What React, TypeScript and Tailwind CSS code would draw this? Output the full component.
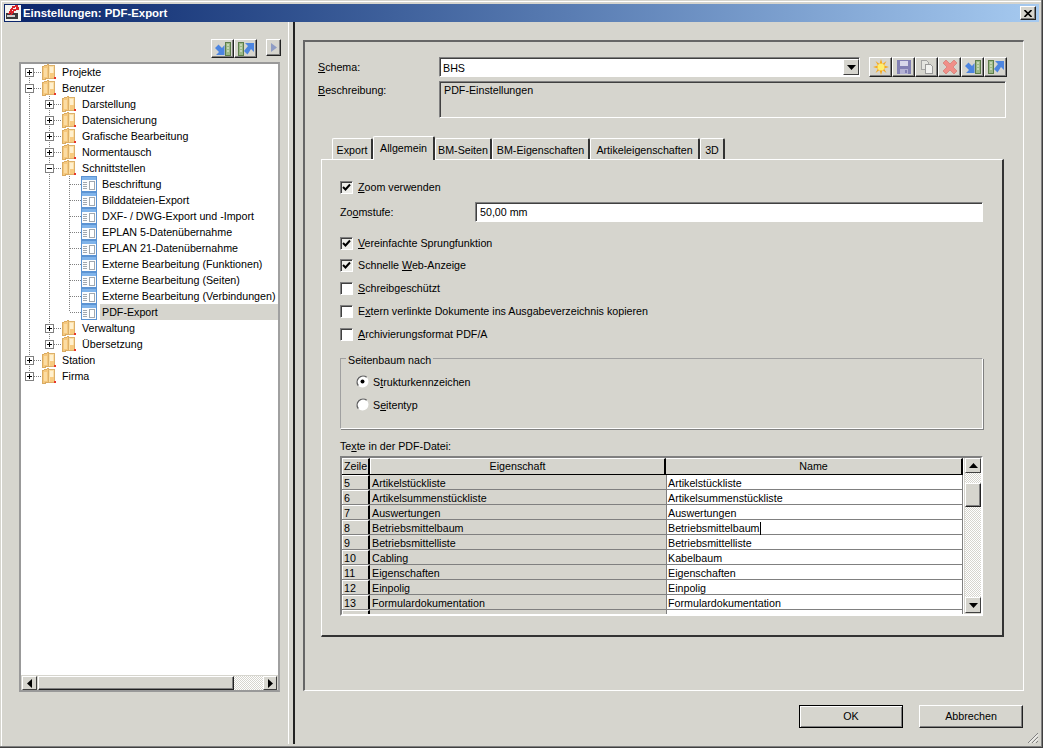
import type { ReactNode } from 'react'

const raised = 'border border-t-white border-l-white border-r-[#222] border-b-[#222] shadow-[inset_-1px_-1px_0_#808080]'
const sunken = 'border border-t-[#808080] border-l-[#808080] border-r-white border-b-white shadow-[inset_1px_1px_0_#404040]'
const dither = 'bg-[repeating-conic-gradient(#fff_0_25%,#d6d5ce_0_50%)] bg-[length:2px_2px]'

type TreeNode = { label: string; open?: boolean; doc?: boolean; selected?: boolean; children?: TreeNode[] }

const tree: TreeNode[] = [
  { label: 'Projekte' },
  {
    label: 'Benutzer',
    open: true,
    children: [
      { label: 'Darstellung' },
      { label: 'Datensicherung' },
      { label: 'Grafische Bearbeitung' },
      { label: 'Normentausch' },
      {
        label: 'Schnittstellen',
        open: true,
        children: [
          { label: 'Beschriftung', doc: true },
          { label: 'Bilddateien-Export', doc: true },
          { label: 'DXF- / DWG-Export und -Import', doc: true },
          { label: 'EPLAN 5-Datenübernahme', doc: true },
          { label: 'EPLAN 21-Datenübernahme', doc: true },
          { label: 'Externe Bearbeitung (Funktionen)', doc: true },
          { label: 'Externe Bearbeitung (Seiten)', doc: true },
          { label: 'Externe Bearbeitung (Verbindungen)', doc: true },
          { label: 'PDF-Export', doc: true, selected: true },
        ],
      },
      { label: 'Verwaltung' },
      { label: 'Übersetzung' },
    ],
  },
  { label: 'Station' },
  { label: 'Firma' },
]

const tableRows = [
  ['5', 'Artikelstückliste', 'Artikelstückliste'],
  ['6', 'Artikelsummenstückliste', 'Artikelsummenstückliste'],
  ['7', 'Auswertungen', 'Auswertungen'],
  ['8', 'Betriebsmittelbaum', 'Betriebsmittelbaum'],
  ['9', 'Betriebsmittelliste', 'Betriebsmittelliste'],
  ['10', 'Cabling', 'Kabelbaum'],
  ['11', 'Eigenschaften', 'Eigenschaften'],
  ['12', 'Einpolig', 'Einpolig'],
  ['13', 'Formulardokumentation', 'Formulardokumentation'],
  ['14', 'Fremddokument', 'Fremddokument'],
]

function FolderIcon() {
  return (
    <svg width="16" height="16" viewBox="0 0 16 16" className="shrink-0" shapeRendering="crispEdges">
      <path d="M1.5 2.5 L7.5 0.5 L7.5 14.5 L1.5 15.5 Z" fill="#f6c87c" stroke="#d9ab62" />
      <path d="M7.5 1.5 L13.5 1.5 L13.5 14.5 L7.5 14.5 Z" fill="#fcdfa4" stroke="#dcb06a" />
      <rect x="3" y="4" width="3" height="9" fill="#fbdca2" />
      <rect x="9" y="3" width="3" height="6" fill="#fff0cf" />
      <rect x="9" y="9" width="4" height="5" fill="#f8cb80" />
      <rect x="13" y="13" width="2" height="2" fill="#e8352a" />
    </svg>
  )
}

function DocIcon() {
  return (
    <svg width="16" height="16" viewBox="0 0 16 16" className="shrink-0" shapeRendering="crispEdges">
      <rect x="0.5" y="0.5" width="15" height="15" fill="#fbfcfe" stroke="#5b93d3" />
      <rect x="1" y="1" width="14" height="3" fill="#7fb3ea" />
      <path d="M2 6h4M2 8h4M2 10h4M2 12h4" stroke="#a0a8b0" />
      <rect x="8.5" y="5.5" width="5" height="8" fill="#fff" stroke="#a0a8b0" />
    </svg>
  )
}

function ArrowIn() {
  return (
    <svg width="16" height="14" viewBox="0 0 16 14">
      <rect x="10.5" y="0.5" width="5" height="13" fill="#9cb886" stroke="#5d7d4a" />
      <path d="M12 3h2M12 6h2M12 9h2" stroke="#eef4e0" />
      <path d="M9.5 3 L9.5 13 L1 13 L4 10 L0 6 L3.5 2.5 L7 6 Z" fill="#4c85e0" />
    </svg>
  )
}

function ArrowOut() {
  return (
    <svg width="16" height="14" viewBox="0 0 16 14">
      <rect x="0.5" y="0.5" width="5" height="13" fill="#9cb886" stroke="#5d7d4a" />
      <path d="M2 3h2M2 6h2M2 9h2" stroke="#eef4e0" />
      <path d="M7 1 L16 1 L16 10 L13 7 L9.5 12.5 L6 9 L10 4 Z" fill="#4c85e0" />
    </svg>
  )
}

function Burst() {
  return (
    <svg width="16" height="16" viewBox="0 0 16 16">
      <path d="M8 0 L9.5 5 L13.5 2 L11 6.5 L16 8 L11 9.5 L13.5 14 L9.5 11 L8 16 L6.5 11 L2.5 14 L5 9.5 L0 8 L5 6.5 L2.5 2 L6.5 5 Z" fill="#f6a81c" />
      <circle cx="8" cy="8" r="3.5" fill="#ffee70" />
    </svg>
  )
}

function Disk() {
  return (
    <svg width="14" height="14" viewBox="0 0 14 14" shapeRendering="crispEdges">
      <rect x="0" y="0" width="14" height="14" fill="#8280b4" />
      <rect x="3" y="1" width="8" height="5" fill="#d8d8ea" />
      <rect x="3" y="9" width="8" height="5" fill="#b4b2d4" />
      <rect x="8" y="10" width="2" height="3" fill="#8280b4" />
    </svg>
  )
}

function Copy() {
  return (
    <svg width="14" height="14" viewBox="0 0 14 14" shapeRendering="crispEdges">
      <path d="M1.5 0.5h5l2 2v7h-7z" fill="#e4e4e0" stroke="#a4a4a4" />
      <path d="M5.5 4.5h5l2 2v7h-7z" fill="#f2f2f0" stroke="#9a9a9a" />
    </svg>
  )
}

function RedX() {
  return (
    <svg width="14" height="14" viewBox="0 0 14 14">
      <path d="M3 0 L7 4 L11 0 L14 3 L10 7 L14 11 L11 14 L7 10 L3 14 L0 11 L4 7 L0 3 Z" fill="#f08f88" stroke="#d07068" strokeWidth="0.6" />
    </svg>
  )
}

function Tri({ dir }: { dir: 'up' | 'down' | 'left' | 'right' }) {
  const d = { up: 'M0 5h9L4.5 0z', down: 'M0 0h9L4.5 5z', left: 'M5 0v9L0 4.5z', right: 'M0 0v9L5 4.5z' }[dir]
  const vertical = dir === 'up' || dir === 'down'
  return (
    <svg width={vertical ? 9 : 5} height={vertical ? 5 : 9} viewBox={vertical ? '0 0 9 5' : '0 0 5 9'}>
      <path d={d} fill="#000" />
    </svg>
  )
}

function Guide({ line }: { line: boolean }) {
  return (
    <svg width="20" height="16" className="shrink-0" shapeRendering="crispEdges">
      {line && <path d="M8.5 0V16" stroke="#808080" strokeDasharray="1 1" />}
    </svg>
  )
}

function Connector({ last, first, box, open }: { last: boolean; first: boolean; box: boolean; open?: boolean }) {
  return (
    <svg width="20" height="16" className="shrink-0" shapeRendering="crispEdges">
      <path d={`M8.5 ${first ? 8 : 0}V${last ? 8 : 16}M9 8.5H20`} stroke="#808080" strokeDasharray="1 1" />
      {box && (
        <>
          <rect x="4.5" y="4.5" width="8" height="8" fill="#fff" stroke="#808080" />
          <path d={open ? 'M6 8.5h5' : 'M6 8.5h5M8.5 6v5'} stroke="#000" />
        </>
      )}
    </svg>
  )
}

function TreeRows({ nodes, guides }: { nodes: TreeNode[]; guides: boolean[] }) {
  return (
    <>
      {nodes.map((n, i) => {
        const last = i === nodes.length - 1
        return (
          <div key={n.label}>
            <div className="flex h-4 items-center">
              {guides.map((g, k) => (
                <Guide key={k} line={g} />
              ))}
              <Connector last={last} first={guides.length === 0 && i === 0} box={!n.doc} open={n.open} />
              {n.doc ? <DocIcon /> : <FolderIcon />}
              <div className={`ml-[3px] flex h-4 flex-1 items-center whitespace-nowrap pl-[2px] ${n.selected ? 'bg-[#d6d5ce]' : ''}`}>
                {n.label}
              </div>
            </div>
            {n.children && <TreeRows nodes={n.children} guides={[...guides, !last]} />}
          </div>
        )
      })}
    </>
  )
}

function ToolButton({ children, className = 'h-5 w-[23px]' }: { children: ReactNode; className?: string }) {
  return <div className={`flex shrink-0 items-center justify-center bg-[#d6d5ce] ${raised} ${className}`}>{children}</div>
}

function ScrollButton({ dir, className }: { dir: 'up' | 'down' | 'left' | 'right'; className: string }) {
  return (
    <div className={`flex shrink-0 items-center justify-center bg-[#d6d5ce] border border-t-white border-l-white border-r-[#404040] border-b-[#404040] ${className}`}>
      <Tri dir={dir} />
    </div>
  )
}

function Check({ checked, className = '', children }: { checked?: boolean; className?: string; children: ReactNode }) {
  return (
    <div className={`flex h-[13px] items-center ${className}`}>
      <div className={`flex h-[13px] w-[13px] shrink-0 items-center justify-center ${sunken} ${checked ? 'bg-[#eeeeea]' : 'bg-white'}`}>
        {checked && (
          <svg width="9" height="9" viewBox="0 0 9 9">
            <path d="M1 4 L3.5 6.5 L8 1.5" fill="none" stroke="#000" strokeWidth="2" />
          </svg>
        )}
      </div>
      <span className="ml-[5px] whitespace-nowrap">{children}</span>
    </div>
  )
}

function Radio({ checked, className = '', children }: { checked?: boolean; className?: string; children: ReactNode }) {
  return (
    <div className={`flex h-[13px] items-center ${className}`}>
      <svg width="13" height="13" viewBox="0 0 13 13" className="shrink-0">
        <circle cx="6.5" cy="6.5" r="6" fill="#fff" />
        <path d="M2.3 10.7 A6 6 0 0 1 10.7 2.3" fill="none" stroke="#606060" strokeWidth="1.4" />
        {checked && <circle cx="6.5" cy="6.5" r="2" fill="#000" />}
      </svg>
      <span className="ml-[4px] whitespace-nowrap pt-[2px]">{children}</span>
    </div>
  )
}

const tabs: [string, string, boolean?][] = [
  ['Export', 'w-[41px]'],
  ['Allgemein', 'w-[62px]', true],
  ['BM-Seiten', 'w-[57px]'],
  ['BM-Eigenschaften', 'w-[98px]'],
  ['Artikeleigenschaften', 'w-[110px]'],
  ['3D', 'w-[25px]'],
]

export default function App() {
  return (
    <div
      className="relative flex h-[748px] w-[1043px] flex-col overflow-hidden bg-[#d6d5ce] p-1 text-[10.7px] leading-[13px] text-black shadow-[inset_-1px_-1px_0_#404040,inset_-2px_-2px_0_#808080,inset_1px_1px_0_#d6d5ce,inset_2px_2px_0_#fff]"
      style={{ fontFamily: '"Liberation Sans", Arial, sans-serif' }}
    >
      {/* title bar */}
      <div className="flex h-[18px] shrink-0 items-center bg-gradient-to-r from-[#0a246a] to-[#a6caf0] pl-[1px] pr-[3px]">
        <svg width="16" height="16" viewBox="0 0 16 16" className="shrink-0" shapeRendering="crispEdges">
          <rect width="16" height="16" fill="#f4f4f0" />
          <rect x="1" y="8" width="12" height="6" fill="#3a3a3a" />
          <rect x="2" y="10" width="8" height="2" fill="#d0d0d0" />
          <path d="M4 9 L8 2 L12 1 L13 4 L9 5 L6 10" fill="none" stroke="#d8232a" strokeWidth="2" />
        </svg>
        <span className="ml-[2px] whitespace-nowrap text-[11.4px] font-bold text-white">Einstellungen: PDF-Export</span>
        <div className={`ml-auto flex h-[14px] w-4 items-center justify-center bg-[#d6d5ce] ${raised}`}>
          <svg width="8" height="7" viewBox="0 0 8 7">
            <path d="M0.5 0 L7.5 7 M7.5 0 L0.5 7" stroke="#000" strokeWidth="1.6" />
          </svg>
        </div>
      </div>

      <div className="flex min-h-0 flex-1">
        {/* left pane */}
        <div className="flex w-[285px] shrink-0 flex-col border-r border-white pl-[15px] pt-[17px]">
          <div className="flex h-[19px] items-start pr-[8px]">
            <ToolButton className="ml-[192px] h-[19px] w-[23px]"><ArrowIn /></ToolButton>
            <ToolButton className="h-[19px] w-[23px]"><ArrowOut /></ToolButton>
            <div className={`ml-[9px] flex h-[17px] w-[15px] shrink-0 items-center justify-center bg-[#d6d5ce] ${raised}`}>
              <svg width="6" height="9" viewBox="0 0 6 9">
                <path d="M0 0v9L6 4.5z" fill="#8f9cc4" />
              </svg>
            </div>
          </div>
          <div className="mt-[4px] flex h-[630px] w-[261px] flex-col border-2 border-[#999] border-r-[#a0a0a0] bg-white">
            <div className="min-h-0 flex-1 overflow-hidden">
              <TreeRows nodes={tree} guides={[]} />
            </div>
            <div className="flex h-[15px] shrink-0 border-t border-[#d6d5ce] bg-[#d6d5ce] px-[1px]">
              <ScrollButton dir="left" className="w-[15px]" />
              <div className={`ml-[1px] w-[196px] bg-[#d6d5ce] ${raised}`} />
              <div className={`flex-1 ${dither}`} />
              <ScrollButton dir="right" className="w-[14px]" />
            </div>
          </div>
        </div>

        {/* splitter */}
        <div className="ml-[4px] w-[2px] shrink-0 bg-[#222]" />

        {/* right pane */}
        <div className="flex min-w-0 flex-1 flex-col pl-2 pr-[15px] pt-[18px]">
          <div className="flex h-[651px] shrink-0 flex-col border-l-2 border-t-2 border-b border-r border-l-[#666] border-t-[#666] border-b-white border-r-white pl-[13px] pt-[15px]">
            <div className="flex items-start">
              <div className="w-[121px] pt-[4px]"><u>S</u>chema:</div>
              <div className={`flex h-5 w-[421px] items-center bg-white pl-[2px] ${sunken}`}>
                <span className="ml-[1px] pt-[2px]">BHS</span>
                <ScrollButton dir="down" className="ml-auto h-4 w-4 border-r-[#222] border-b-[#222]" />
              </div>
              <div className="ml-[9px] flex">
                <ToolButton><Burst /></ToolButton>
                <ToolButton><Disk /></ToolButton>
                <ToolButton><Copy /></ToolButton>
                <ToolButton><RedX /></ToolButton>
                <ToolButton><ArrowIn /></ToolButton>
                <ToolButton><ArrowOut /></ToolButton>
              </div>
            </div>
            <div className="mt-[4px] flex items-start">
              <div className="w-[121px] pt-[3px]"><u>B</u>eschreibung:</div>
              <div className={`h-[37px] w-[567px] pl-[4px] pt-[2px] ${sunken}`}>PDF-Einstellungen</div>
            </div>

            {/* tabs */}
            <div className="ml-[3px] mt-[18px] w-[683px]">
              <div className="relative z-10 flex h-[23px] items-end pl-[11px]">
                {tabs.map(([label, width, active]) => (
                  <div
                    key={label}
                    className={`flex shrink-0 items-center justify-center whitespace-nowrap rounded-t-[2px] border-l border-t border-r-2 border-l-white border-t-white border-r-[#333] ${width} ${active ? '-mb-px h-6 bg-[#d6d5ce] pb-[1px]' : 'h-[21px] pt-[2px]'}`}
                  >
                    {label}
                  </div>
                ))}
              </div>
              <div className="flex h-[478px] flex-col border-b-2 border-l border-r-2 border-t border-b-[#333] border-l-white border-r-[#333] border-t-white pl-[18px] pt-[21px]">
                <Check checked><u>Z</u>oom verwenden</Check>
                <div className="mt-[8px] flex h-5 items-center">
                  <div className="w-[135px]">Zo<u>o</u>mstufe:</div>
                  <div className={`flex h-5 w-[508px] items-center bg-white pl-[4px] pt-[1px] ${sunken}`}>50,00 mm</div>
                </div>
                <Check checked className="mt-[15px]"><u>V</u>ereinfachte Sprungfunktion</Check>
                <Check checked className="mt-[9px]">Schnelle <u>W</u>eb-Anzeige</Check>
                <Check className="mt-[10px]"><u>S</u>chreibgeschützt</Check>
                <Check className="mt-[10px]">E<u>x</u>tern verlinkte Dokumente ins Ausgabeverzeichnis kopieren</Check>
                <Check className="mt-[10px]"><u>A</u>rchivierungsformat PDF/A</Check>

                {/* group box */}
                <div className="relative mt-[17px] h-[71px] w-[643px] border border-[#a0a0a0] border-b-white border-r-white pl-[15px] pt-4 shadow-[1px_1px_0_#808080]">
                  <div className="absolute -top-[5px] left-[5px] bg-[#d6d5ce] px-[2px]">Seitenbaum nach</div>
                  <Radio checked>S<u>t</u>rukturkennzeichen</Radio>
                  <Radio className="mt-[10px]">S<u>e</u>itentyp</Radio>
                </div>

                <div className="mt-[11px]">Te<u>x</u>te in der PDF-Datei:</div>

                {/* grid */}
                <div className="mt-[3px] flex h-[160px] w-[643px] overflow-hidden border-2 border-[#808080] border-b-white border-r-white">
                  <div className="min-w-0 flex-1 overflow-hidden">
                    <div className="flex h-[17px] border-b border-black">
                      <div className="flex w-[28px] shrink-0 items-center justify-center border-r-2 border-black border-t border-l border-t-white border-l-white">Zeile</div>
                      <div className="flex w-[296px] shrink-0 items-center justify-center border-r-2 border-black border-t border-l border-t-white border-l-white">Eigenschaft</div>
                      <div className="flex flex-1 items-center justify-center border-r-2 border-black border-t border-t-white">Name</div>
                    </div>
                    {tableRows.map(([nr, prop, name]) => (
                      <div key={nr} className="flex h-[15px] border-b border-[#808080]">
                        <div className="flex w-[28px] shrink-0 items-center border-r-2 border-black border-l border-t border-l-white border-t-white pl-[1px] pt-[1px]">{nr}</div>
                        <div className="flex w-[296px] shrink-0 items-center pl-[2px] pt-[2px]">{prop}</div>
                        <div className="flex flex-1 items-center border-l border-r border-[#808080] bg-white pl-[1px] pt-[2px]">
                          {name}
                          {nr === '8' && <span className="ml-[1px] h-[13px] w-[1px] bg-black" />}
                        </div>
                      </div>
                    ))}
                  </div>
                  <div className="flex w-[18px] shrink-0 flex-col border-l border-white pb-[1px] pl-[1px]">
                    <ScrollButton dir="up" className="h-[15px] w-4 border-r-[#222] border-b-[#222]" />
                    <div className={`h-[10px] shrink-0 ${dither}`} />
                    <div className={`h-[24px] w-4 shrink-0 bg-[#d6d5ce] ${raised}`} />
                    <div className={`min-h-0 flex-1 ${dither}`} />
                    <ScrollButton dir="down" className="h-[16px] w-4 border-r-[#222] border-b-[#222]" />
                  </div>
                </div>
              </div>
            </div>
          </div>

          {/* dialog buttons */}
          <div className="mr-[1px] mt-[14px] flex justify-end gap-4">
            <div className="flex h-[23px] w-[104px] items-center justify-center border border-black shadow-[inset_1px_1px_0_#fff,inset_-1px_-1px_0_#808080]">OK</div>
            <div className={`flex h-[23px] w-[104px] items-center justify-center ${raised}`}>Abbrechen</div>
          </div>
        </div>
      </div>

      {/* resize grip */}
      <svg width="12" height="12" viewBox="0 0 12 12" className="absolute bottom-[4px] right-[4px]">
        <path d="M11 1 L1 11 M11 5 L5 11 M11 9 L9 11" stroke="#808080" strokeWidth="1" />
        <path d="M11 2.5 L2.5 11 M11 6.5 L6.5 11" stroke="#fff" strokeWidth="1" />
      </svg>
    </div>
  )
}
